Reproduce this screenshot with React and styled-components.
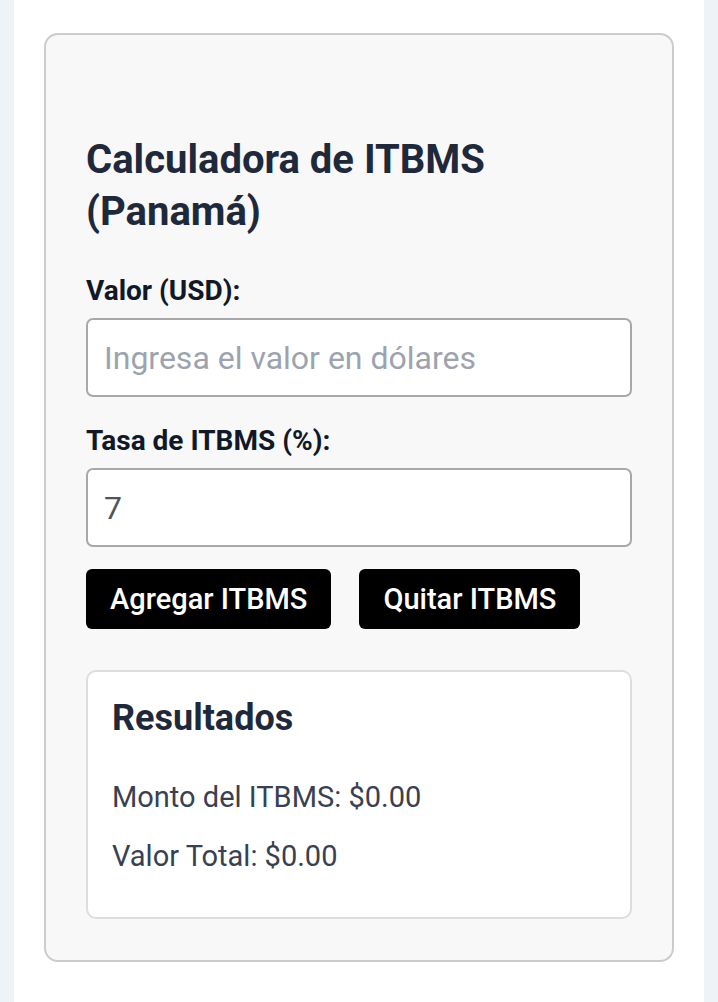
import React, { useState } from "react";
import styled, { createGlobalStyle } from "styled-components";

const Global = createGlobalStyle`
  html, body { margin: 0; padding: 0; background: #eef3f8; }
  body { font-family: Roboto, "Noto Sans", Arial, sans-serif; }
  * { box-sizing: border-box; }
`;

const Page = styled.div`
  margin: 0 14px;
  min-height: 1002px;
  background: #ffffff;
  padding: 33px 30px 40px;
`;

const Card = styled.div`
  background: #f8f8f8;
  border: 2px solid #cccccc;
  border-radius: 14px;
  padding: 99px 40px 41px;
  display: flex;
  flex-direction: column;
`;

const Title = styled.h2`
  margin: 0 0 36px;
  font-size: 40px;
  line-height: 52px;
  font-weight: 700;
  color: #1e293b;
`;

const Label = styled.label`
  display: block;
  font-size: 28px;
  line-height: 33px;
  font-weight: 700;
  color: #111827;
  margin-bottom: 11px;
`;

const Input = styled.input`
  display: block;
  width: 100%;
  height: 79px;
  border: 2px solid #a8a8a8;
  border-radius: 7px;
  background: #ffffff;
  padding: 0 16px;
  font-family: inherit;
  font-size: 32px;
  color: #4b5563;
  margin: 0 0 27px;
  outline: none;
  &::placeholder { color: #9ca3af; }
`;

const ButtonRow = styled.div`
  display: flex;
  gap: 28px;
  margin-top: -5px;
  margin-bottom: 41px;
`;

const Button = styled.button`
  height: 60px;
  padding: 0 24px;
  background: #000000;
  color: #ffffff;
  border: none;
  border-radius: 6px;
  font-family: inherit;
  font-size: 29px;
  font-weight: 500;
  cursor: pointer;
`;

const Results = styled.div`
  background: #ffffff;
  border: 2px solid #dddddd;
  border-radius: 10px;
  padding: 25px 24px 44px;
`;

const ResultsTitle = styled.h3`
  margin: 0 0 41px;
  font-size: 36px;
  line-height: 42px;
  font-weight: 700;
  color: #1e293b;
`;

const ResultLine = styled.p`
  margin: 0 0 25px;
  font-size: 29px;
  line-height: 34px;
  color: #374151;
  &:last-child { margin-bottom: 0; }
`;

export default function App() {
  const [valor, setValor] = useState("");
  const [tasa, setTasa] = useState("7");
  return (
    <>
      <Global />
      <Page>
        <Card>
          <Title>Calculadora de ITBMS (Panamá)</Title>
          <Label htmlFor="valor">Valor (USD):</Label>
          <Input
            id="valor"
            type="text"
            placeholder="Ingresa el valor en dólares"
            value={valor}
            onChange={(e) => setValor(e.target.value)}
          />
          <Label htmlFor="tasa">Tasa de ITBMS (%):</Label>
          <Input
            id="tasa"
            type="text"
            value={tasa}
            onChange={(e) => setTasa(e.target.value)}
          />
          <ButtonRow>
            <Button>Agregar ITBMS</Button>
            <Button>Quitar ITBMS</Button>
          </ButtonRow>
          <Results>
            <ResultsTitle>Resultados</ResultsTitle>
            <ResultLine>Monto del ITBMS: $0.00</ResultLine>
            <ResultLine>Valor Total: $0.00</ResultLine>
          </Results>
        </Card>
      </Page>
    </>
  );
}
